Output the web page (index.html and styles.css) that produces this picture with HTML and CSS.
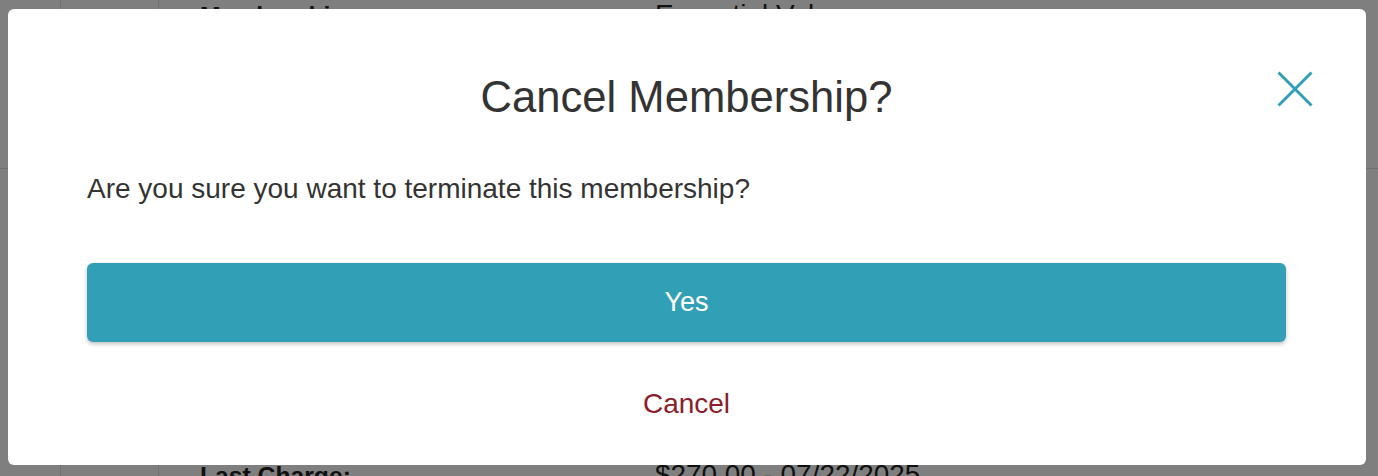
FILE: index.html
```html
<!DOCTYPE html>
<html lang="en">
<head>
<meta charset="utf-8">
<title>Cancel Membership</title>
<link rel="stylesheet" href="styles.css">
</head>
<body>
<div class="page">
  <div class="rail top"></div>
  <div class="nav top"></div>
  <div class="content top">
    <div class="row"><span class="label">Membership:</span><span class="value">Essential Value</span></div>
  </div>
  <div class="rail"></div>
  <div class="nav"></div>
  <div class="content lower">
    <div class="row"><span class="label">Last Charge:</span><span class="value">$270.00 - 07/22/2025</span></div>
  </div>
</div>

<div class="overlay">
  <div class="modal" role="dialog" aria-modal="true">
    <button class="close" aria-label="Close">
      <svg viewBox="0 0 36 36" width="36" height="36"><path d="M1.5 1.5 L34.5 34.5 M34.5 1.5 L1.5 34.5" fill="none" stroke="#31a0b6" stroke-width="3"/></svg>
    </button>
    <h2 class="title">Cancel Membership?</h2>
    <p class="message">Are you sure you want to terminate this membership?</p>
    <button class="yes">Yes</button>
    <button class="cancel">Cancel</button>
  </div>
</div>
</body>
</html>
```
FILE: styles.css
```css
* { box-sizing: border-box; }
html, body { margin: 0; height: 100%; }
body {
  font-family: "Liberation Sans", Arial, sans-serif;
  color: #222;
  background: #fff;
  overflow: hidden;
}
.page {
  display: grid;
  grid-template-columns: 61px 98px 1fr;
  grid-template-rows: 169px 1fr;
  height: 100vh;
}
.rail, .nav { border-right: 1px solid #e2e2e2; }
.top { border-bottom: 1px solid #e2e2e2; }
.content {
  padding-left: 41px;
  display: flex;
  flex-direction: column;
  overflow: hidden;
}
.content.lower { padding-top: 291px; }
.row { display: flex; height: 30px; align-items: baseline; line-height: 30px; }
.label { width: 455px; font-weight: bold; font-size: 24.7px; }
.value { font-size: 27.9px; }

.overlay {
  position: fixed;
  inset: 0;
  background: rgba(0, 0, 0, 0.5);
  padding: 9px 12px 11px 8px;
  display: flex;
}
.modal {
  flex: 1;
  position: relative;
  background: #fff;
  border-radius: 6px;
  padding: 63px 80px 45px 79px;
  display: flex;
  flex-direction: column;
  color: #333;
}
.close {
  position: absolute;
  top: 62px;
  right: 53px;
  width: 36px;
  height: 36px;
  padding: 0;
  border: 0;
  background: none;
  display: flex;
}
.title {
  margin: 0;
  font-weight: normal;
  font-size: 43.6px;
  line-height: 50px;
  text-align: center;
  color: #333;
}
.message {
  margin: 51px 0 0;
  font-size: 28px;
  line-height: 32px;
}
.yes {
  margin-top: 58px;
  height: 79px;
  border: 0;
  border-radius: 6px;
  background: #31a0b6;
  color: #fff;
  font-family: inherit;
  font-size: 27px;
  box-shadow: 0 2px 4px rgba(0, 0, 0, 0.25);
  display: flex;
  align-items: center;
  justify-content: center;
}
.cancel {
  margin-top: 46px;
  height: 32px;
  border: 0;
  background: none;
  padding: 0;
  font-family: inherit;
  font-size: 28px;
  line-height: 32px;
  color: #8b1d2c;
  text-align: center;
}
```
